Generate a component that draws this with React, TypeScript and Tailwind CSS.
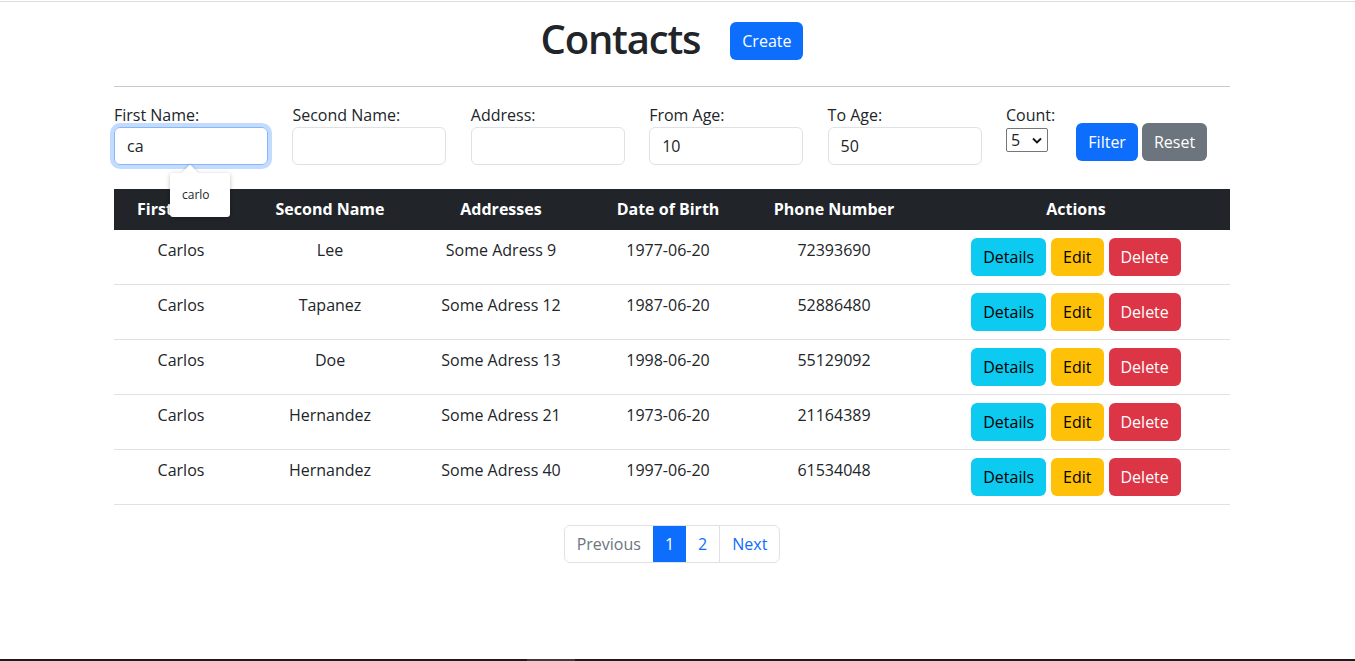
import React from 'react';

const rows = [
  { first: 'Carlos', second: 'Lee', address: 'Some Adress 9', dob: '1977-06-20', phone: '72393690' },
  { first: 'Carlos', second: 'Tapanez', address: 'Some Adress 12', dob: '1987-06-20', phone: '52886480' },
  { first: 'Carlos', second: 'Doe', address: 'Some Adress 13', dob: '1998-06-20', phone: '55129092' },
  { first: 'Carlos', second: 'Hernandez', address: 'Some Adress 21', dob: '1973-06-20', phone: '21164389' },
  { first: 'Carlos', second: 'Hernandez', address: 'Some Adress 40', dob: '1997-06-20', phone: '61534048' },
];

const Field = ({ label, value, focused }: { label: string; value?: string; focused?: boolean }) => (
  <div className="relative flex w-[154px] flex-col">
    <label className="leading-6">{label}</label>
    <div
      className={
        focused
          ? 'flex h-[38px] items-center rounded-md border border-[#86b7fe] px-3 shadow-[0_0_0_4px_rgba(13,110,253,0.25)]'
          : 'flex h-[38px] items-center rounded-md border border-[#dee2e6] px-3'
      }
    >
      {value}
    </div>
    {focused && (
      <div className="absolute left-[56px] top-[70px] z-10 flex h-[44px] w-[60px] items-center rounded-[3px] bg-white pl-3 text-[12px] shadow-[0_1px_4px_rgba(0,0,0,0.25)]">
        <div className="absolute -top-[6px] left-[14px] h-3 w-3 rotate-45 bg-white shadow-[-1px_-1px_2px_rgba(0,0,0,0.12)]" />
        <span className="relative">carlo</span>
      </div>
    )}
  </div>
);

const cell = 'px-2 py-2 align-top leading-6';

export default function App() {
  return (
    <div className="flex min-h-screen flex-col bg-white font-['Open_Sans',sans-serif] text-[16px] text-[#212529]">
      <div className="mt-px h-px bg-[#dcdcdc]" />
      <div className="ml-[114px] w-[1116px]">
        <div className="flex items-center justify-center gap-[30px] pt-[20px]">
          <h1 className="-mt-1 text-[40px] font-semibold leading-[38px] tracking-[-1.2px]">Contacts</h1>
          <button className="h-[38px] rounded-md bg-[#0d6efd] px-3 text-white">Create</button>
        </div>
        <hr className="mt-[26px] border-t border-[#c8c9ca]" />

        <div className="mt-4 flex gap-[24.4px]">
          <Field label="First Name:" value="ca" focused />
          <Field label="Second Name:" />
          <Field label="Address:" />
          <Field label="From Age:" value="10" />
          <Field label="To Age:" value="50" />
          <div className="flex w-[46px] flex-col">
            <label className="whitespace-nowrap leading-6">Count:</label>
            <div className="mt-px flex h-[24px] w-[42px] items-center justify-between rounded-[2px] border border-[#767676] pl-1 pr-[5px]">
              <span>5</span>
              <svg width="10" height="7" viewBox="0 0 10 7" fill="none">
                <path d="M1 1.5 5 5.5 9 1.5" stroke="#111" strokeWidth="1.8" />
              </svg>
            </div>
          </div>
          <div className="mt-5 flex gap-1">
            <button className="h-[38px] rounded-md bg-[#0d6efd] px-3 text-white">Filter</button>
            <button className="h-[38px] rounded-md bg-[#6c757d] px-3 text-white">Reset</button>
          </div>
        </div>

        <table className="mt-6 w-full border-collapse text-center">
          <thead>
            <tr className="h-[41px] bg-[#212529] text-white">
              <th className="w-[134px] pb-px font-bold">First Name</th>
              <th className="w-[164px] pb-px font-bold">Second Name</th>
              <th className="w-[178px] pb-px font-bold">Addresses</th>
              <th className="w-[156px] pb-px font-bold">Date of Birth</th>
              <th className="w-[176px] pb-px font-bold">Phone Number</th>
              <th className="pb-px font-bold">Actions</th>
            </tr>
          </thead>
          <tbody>
            {rows.map((r, i) => (
              <tr key={i} className="border-b border-[#dee2e6]">
                <td className={cell}>{r.first}</td>
                <td className={cell}>{r.second}</td>
                <td className={cell}>{r.address}</td>
                <td className={cell}>{r.dob}</td>
                <td className={cell}>{r.phone}</td>
                <td className="px-2 py-2">
                  <div className="flex justify-center gap-[5px]">
                    <button className="h-[38px] rounded-md bg-[#0dcaf0] px-3 text-black">Details</button>
                    <button className="h-[38px] rounded-md bg-[#ffc107] px-3 text-black">Edit</button>
                    <button className="h-[38px] rounded-md bg-[#dc3545] px-3 text-white">Delete</button>
                  </div>
                </td>
              </tr>
            ))}
          </tbody>
        </table>

        <div className="mt-5 flex justify-center">
          <div className="flex h-[38px] overflow-hidden rounded-md border border-[#dee2e6]">
            <span className="flex items-center px-3 text-[#6c757d]">Previous</span>
            <span className="flex items-center bg-[#0d6efd] px-3 text-white">1</span>
            <span className="flex items-center border-r border-[#dee2e6] px-3 text-[#0d6efd]">2</span>
            <span className="flex items-center px-3 text-[#0d6efd]">Next</span>
          </div>
        </div>
      </div>
      <div className="flex-1" />
      <div className="flex h-[2px] bg-[#1c1c1c]">
        <div className="ml-[527px] w-[48px] bg-[#3c3c3c]" />
      </div>
    </div>
  );
}
